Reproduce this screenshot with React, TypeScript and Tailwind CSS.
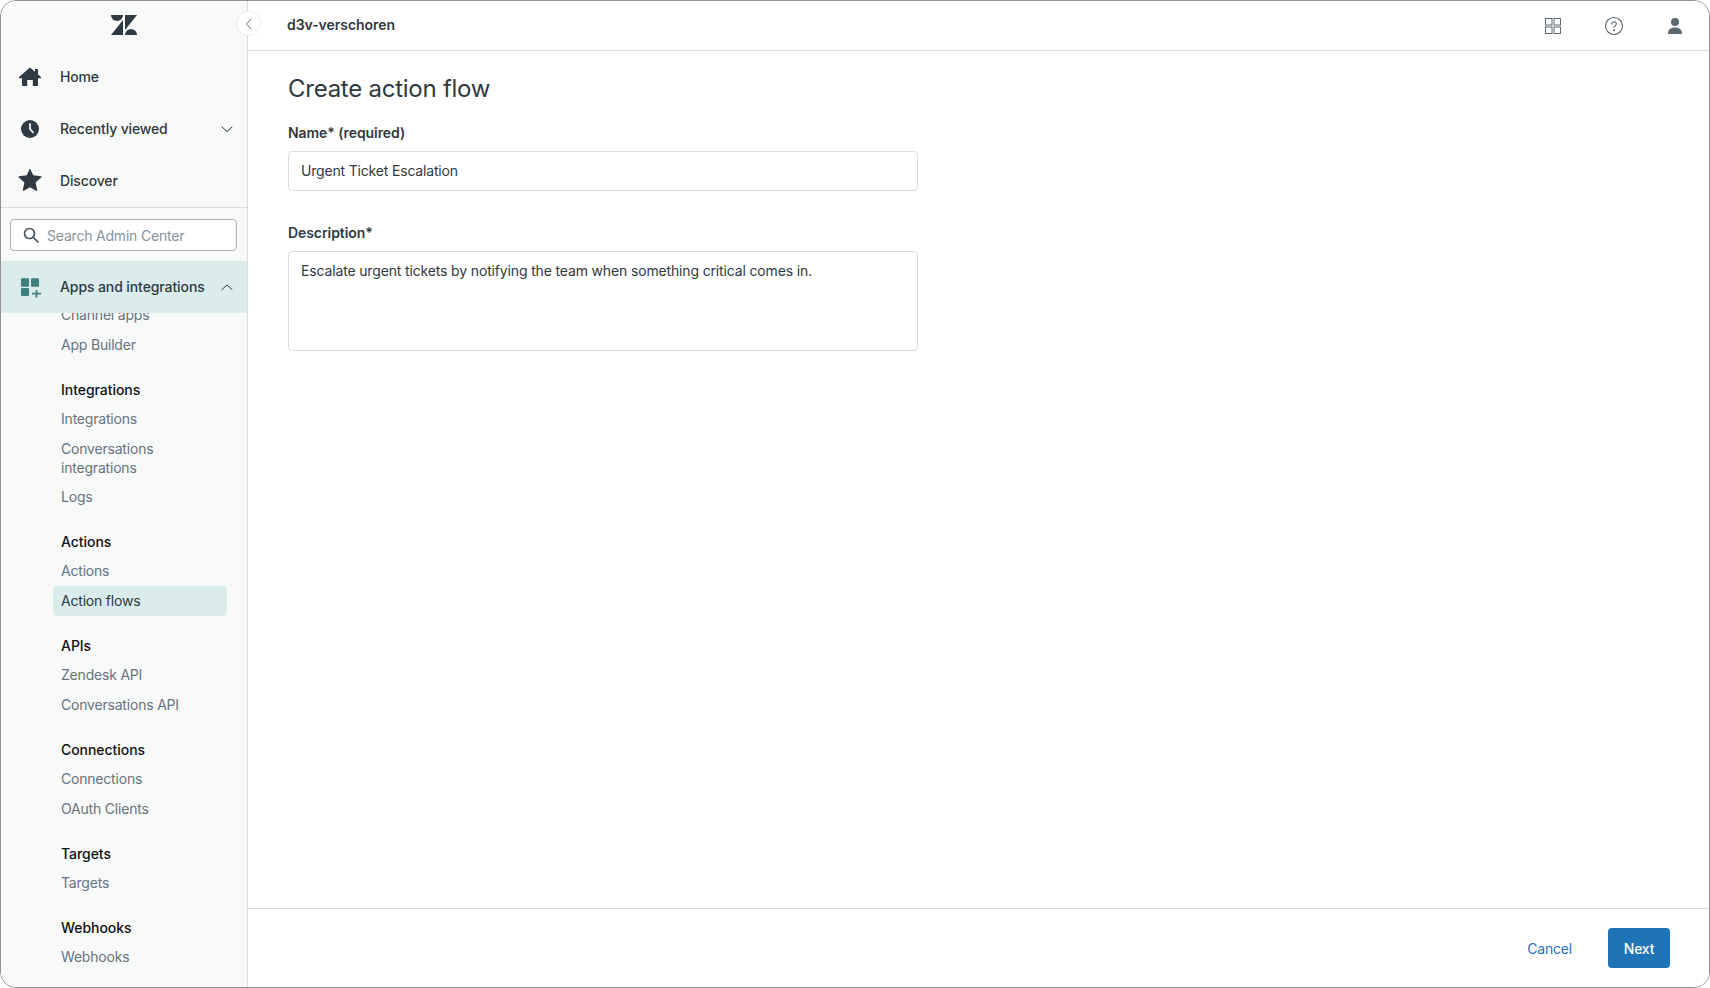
import { ReactNode } from "react";

type NavGroup = {
  title?: string;
  items: string[];
};

const groups: NavGroup[] = [
  { items: ["Channel apps", "App Builder"] },
  { title: "Integrations", items: ["Integrations", "Conversations integrations", "Logs"] },
  { title: "Actions", items: ["Actions", "Action flows"] },
  { title: "APIs", items: ["Zendesk API", "Conversations API"] },
  { title: "Connections", items: ["Connections", "OAuth Clients"] },
  { title: "Targets", items: ["Targets"] },
  { title: "Webhooks", items: ["Webhooks"] },
];

function Logo() {
  return (
    <svg width="26" height="20" viewBox="0 0 26 20" fill="#2f3941">
      <path d="M0 0H12A6 6 0 0 1 0 0Z" />
      <path d="M14 15V0H26Z" />
      <path d="M12 5V20H0Z" />
      <path d="M14 20A6 6 0 0 1 26 20Z" />
    </svg>
  );
}

function HomeIcon() {
  return (
    <svg width="24" height="24" viewBox="0 0 24 24" fill="#2f3941">
      <path d="M12 2.500 23 12c.5.500.2 1.200-.5 1.200H20v7c0 .5-.3.8-.8.8h-4.400v-6h-5.600v6H4.800c-.5 0-.8-.3-.8-.8v-7H1.500c-.7 0-1-.7-.5-1.200Z" />
      <rect x="17" y="4" width="3" height="6" />
    </svg>
  );
}

function ClockIcon() {
  return (
    <svg width="24" height="24" viewBox="0 0 24 24">
      <circle cx="12" cy="12" r="9" fill="#2f3941" />
      <path d="M12 6.800V12l3 3.400" fill="none" stroke="#f8f9f9" strokeWidth="1.700" strokeLinecap="round" strokeLinejoin="round" />
    </svg>
  );
}

function StarIcon() {
  return (
    <svg width="24" height="24" viewBox="0 0 24 24" fill="#2f3941">
      <path transform="translate(0 -2)" d="M12 1.200 15.200 8.300l7.800.9c.6.100.8.700.4 1.100l-5.800 5.200 1.600 7.600c.1.600-.5 1-1 .7L12 20.200l-6.200 3.600c-.5.300-1.100-.1-1-.7l1.600-7.600L.6 10.300c-.4-.4-.2-1 .4-1.100l7.800-.9Z" />
    </svg>
  );
}

function AppsIcon() {
  return (
    <svg width="24" height="24" viewBox="0 0 24 24" fill="#3f7f80">
      <rect x="3" y="3.300" width="8" height="8.400" rx="1" />
      <rect x="13" y="3.300" width="8" height="8.400" rx="1" />
      <rect x="3" y="13" width="8" height="8" rx="1" />
      <path d="M18.500 15v7.500M14 18.700h9" fill="none" stroke="#3f7f80" strokeWidth="1.800" />
    </svg>
  );
}

function Chevron({ up }: { up?: boolean }) {
  return (
    <svg width="12" height="12" viewBox="0 0 12 12" fill="none" stroke="#2f3941" strokeWidth="1" strokeLinecap="round">
      <path d={up ? "M1 8.500 6 4l5 4.500" : "M1 4l5 4.500L11 4"} />
    </svg>
  );
}

function MainNavRow({ icon, label, right }: { icon: ReactNode; label: string; right?: ReactNode }) {
  return (
    <div className="flex h-[52px] items-center pl-[17px] pr-[14px]">
      <div className="h-[24px] w-[24px]">{icon}</div>
      <span className="ml-[18px] mb-[2px] flex-1 text-[14px] font-medium tracking-[-0.15px] text-[#2f3941]">{label}</span>
      {right}
    </div>
  );
}

function Sidebar() {
  return (
    <aside className="flex h-full w-[247px] shrink-0 flex-col border-r border-[#d8dcde] bg-[#f8f9f9]">
      <div className="flex h-[50px] shrink-0 items-center justify-center pb-[2px]">
        <Logo />
      </div>
      <MainNavRow icon={<HomeIcon />} label="Home" />
      <MainNavRow icon={<ClockIcon />} label="Recently viewed" right={<Chevron />} />
      <MainNavRow icon={<StarIcon />} label="Discover" />
      <div className="border-b border-[#d8dcde]" />
      <div className="pl-[9px] pr-[10px] pt-[11px] pb-[10px]">
        <div className="flex h-[32px] items-center gap-[8px] rounded-[4px] border border-[#a9b2b9] bg-white pl-[12px]">
          <svg width="16" height="16" viewBox="0 0 16 16" fill="none" stroke="#49545c" strokeWidth="1.700" strokeLinecap="round">
            <circle cx="6.500" cy="6.500" r="5" />
            <path d="m10.500 10.500 4.500 4.500" />
          </svg>
          <span className="text-[14px] tracking-[-0.2px] text-[#87929d]">Search Admin Center</span>
        </div>
      </div>
      <div className="flex h-[52px] shrink-0 items-center bg-[#dbecec] pl-[17px] pr-[14px]">
        <div className="h-[24px] w-[24px]">
          <AppsIcon />
        </div>
        <span className="ml-[18px] mb-[2px] flex-1 text-[14px] font-medium tracking-[-0.1px] text-[#2f3941]">Apps and integrations</span>
        <Chevron up />
      </div>
      <div className="min-h-0 flex-1 overflow-hidden pl-[52px] pr-[20px]">
        <div className="mt-[-13px]">
          {groups.map((group, i) => (
            <div key={i} className={i > 0 ? "mt-[15px]" : ""}>
              {group.title && (
                <div className="flex h-[29px] items-center pl-[8px] text-[14px] font-medium tracking-[-0.05px] text-[#0e1114]">{group.title}</div>
              )}
              {group.items.map((item) => (
                <div
                  key={item}
                  className={
                    item === "Action flows"
                      ? "flex h-[30px] items-center rounded-[4px] bg-[#dbecec] pb-[2px] pl-[8px] text-[14px] tracking-[-0.2px] text-[#2f3941]"
                      : item === "Conversations integrations"
                        ? "py-[5px] pl-[8px] pr-[30px] text-[14px] leading-[19px] tracking-[-0.2px] text-[#68737d]"
                        : "flex h-[30px] items-center pb-[2px] pl-[8px] text-[14px] tracking-[-0.2px] text-[#68737d]"
                  }
                >
                  {item}
                </div>
              ))}
            </div>
          ))}
        </div>
      </div>
    </aside>
  );
}

function TopBar() {
  return (
    <header className="flex h-[50px] shrink-0 items-center border-b border-[#d8dcde] pl-[39px] pr-[24px]">
      <span className="mb-[2px] flex-1 text-[14px] font-semibold tracking-[-0.05px] text-[#2f3941]">d3v-verschoren</span>
      <div className="flex items-center gap-[41px] text-[#5c6970]">
        <svg width="20" height="20" viewBox="0 0 20 20" fill="none" stroke="currentColor" strokeWidth="1">
          <rect x="2.500" y="2.500" width="6.500" height="6.500" />
          <rect x="11" y="2.500" width="6.500" height="6.500" />
          <rect x="2.500" y="11" width="6.500" height="6.500" />
          <rect x="11" y="11" width="6.500" height="6.500" />
        </svg>
        <svg width="20" height="20" viewBox="0 0 20 20" fill="none" stroke="currentColor" strokeWidth="1.100">
          <circle cx="10" cy="10" r="8.500" />
          <path d="M7.800 8c0-1.400 1-2.300 2.200-2.300s2.300.9 2.300 2.100c0 2-2.300 2-2.300 3.900" strokeLinecap="round" />
          <circle cx="10" cy="14.300" r="0.500" fill="currentColor" />
        </svg>
        <svg width="20" height="20" viewBox="0 0 20 20" fill="currentColor">
          <circle cx="10" cy="6" r="4" />
          <path d="M3 17.500c0-3.800 2.500-6 7-6s7 2.200 7 6c0 .3-.2.500-.5.500h-13c-.3 0-.5-.2-.5-.500Z" />
        </svg>
      </div>
    </header>
  );
}

export default function App() {
  return (
    <div className="relative h-[988px] w-[1710px] overflow-hidden bg-white font-['Inter',sans-serif]">
      <div className="relative flex h-full w-full overflow-hidden rounded-[16px] border border-[#8f9193]">
        <Sidebar />
        <main className="flex min-w-0 flex-1 flex-col bg-white">
          <TopBar />
          <div className="flex-1 pl-[40px] pt-[20px]">
            <h1 className="text-[24px] leading-[36px] font-normal tracking-[-0.25px] text-[#2f3941]">Create action flow</h1>
            <label className="mt-[16px] block text-[14px] leading-[20px] font-semibold tracking-[-0.07px] text-[#2f3941]">Name* (required)</label>
            <div className="mt-[8px] flex h-[40px] w-[630px] items-center rounded-[4px] border border-[#d8dcde] px-[12px] pb-[1px] text-[14px] tracking-[-0.18px] text-[#2f3941]">
              Urgent Ticket Escalation
            </div>
            <label className="mt-[32px] block text-[14px] leading-[20px] font-semibold tracking-[-0.07px] text-[#2f3941]">Description*</label>
            <div className="mt-[8px] h-[100px] w-[630px] rounded-[4px] border border-[#d8dcde] px-[12px] pt-[9px] text-[14px] leading-[20px] tracking-[-0.15px] text-[#2f3941]">
              Escalate urgent tickets by notifying the team when something critical comes in.
            </div>
          </div>
          <footer className="flex h-[79px] shrink-0 items-center justify-end gap-[36px] border-t border-[#d8dcde] pr-[39px]">
            <button className="text-[14px] tracking-[-0.2px] text-[#1f73b7]">Cancel</button>
            <button className="h-[40px] w-[62px] rounded-[4px] bg-[#1f73b7] text-[14px] font-medium tracking-[-0.25px] text-white">Next</button>
          </footer>
        </main>
        <button className="absolute left-[235px] top-[10px] flex h-[25px] w-[25px] items-center justify-center rounded-full border border-[#e9ebed] bg-white">
          <svg width="12" height="12" viewBox="0 0 12 12" fill="none" stroke="#68737d" strokeWidth="1" strokeLinecap="round">
            <path d="M8 1 3.500 6 8 11" />
          </svg>
        </button>
      </div>
    </div>
  );
}
